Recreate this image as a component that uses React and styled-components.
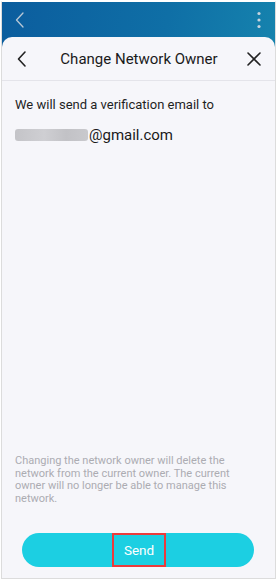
import React from "react";
import styled, { createGlobalStyle } from "styled-components";

const Global = createGlobalStyle`
	html, body {
		margin: 0;
		padding: 0;
		background: #ffffff;
	}
	body {
		font-family: Roboto, "Noto Sans", sans-serif;
	}
`;

const Frame = styled.div`
	width: 277px;
	height: 580px;
	box-sizing: border-box;
	padding: 1px;
	background: #ffffff;
`;

const Screen = styled.div`
	height: 100%;
	display: flex;
	flex-direction: column;
	border: 1px solid #dcdcdc;
	border-top-color: #ffffff;
	box-sizing: border-box;
	background: linear-gradient(100deg, #0b5d9e 0%, #0f6fa6 45%, #1b93b4 100%);
`;

const TopBar = styled.div`
	height: 35px;
	display: flex;
	align-items: center;
	justify-content: space-between;
	padding: 0 14px 0 12px;
	flex-shrink: 0;
`;

const Sheet = styled.div`
	flex: 1;
	display: flex;
	flex-direction: column;
	background: #f6f6fa;
	border-radius: 10px 10px 0 0;
`;

const Header = styled.div`
	height: 43px;
	display: flex;
	align-items: center;
	justify-content: space-between;
	padding: 0 12px 0 11px;
	border-bottom: 1px solid #e4e4ea;
	flex-shrink: 0;
`;

const Title = styled.div`
	font-size: 15px;
	color: #1a1a1a;
	margin-left: 2px;
`;

const IconButton = styled.div`
	width: 18px;
	height: 18px;
	display: flex;
	align-items: center;
	justify-content: center;
`;

const Body = styled.div`
	flex: 1;
	display: flex;
	flex-direction: column;
	padding: 0 13px;
`;

const Lead = styled.p`
	margin: 15px 0 0;
	font-size: 13px;
	line-height: 18px;
	color: #1f1f1f;
`;

const EmailRow = styled.div`
	margin-top: 11px;
	display: flex;
	align-items: center;
	font-size: 15px;
	color: #1a1a1a;
	line-height: 20px;
`;

const Blur = styled.span`
	display: inline-block;
	width: 73px;
	height: 12px;
	margin-right: 1px;
	border-radius: 3px;
	background: linear-gradient(90deg, #c4c4c8 0%, #cfcfd3 40%, #c2c2c6 70%, #c9c9cd 100%);
	filter: blur(0.6px);
`;

const Spacer = styled.div`
	flex: 1;
`;

const Note = styled.p`
	margin: 0;
	font-size: 11px;
	line-height: 12.5px;
	color: #acacb2;
	padding-right: 20px;
`;

const Footer = styled.div`
	padding: 28px 21px 11px 20px;
`;

const SendButton = styled.button`
	width: 100%;
	height: 34px;
	border: none;
	border-radius: 17px;
	background: #1ccfe2;
	display: flex;
	align-items: center;
	justify-content: center;
	padding: 0;
	font-family: inherit;
`;

const Highlight = styled.span`
	width: 50px;
	height: 30px;
	border: 2px solid #ec3b3b;
	display: flex;
	align-items: center;
	justify-content: center;
	color: #ffffff;
	font-size: 13.5px;
	box-sizing: content-box;
	margin-left: 2px;
`;

const Chevron = ({ color = "#222", w = 1.6 }) => (
	<svg width="12" height="18" viewBox="0 0 12 18">
		<path d="M9 2 L2.5 9 L9 16" fill="none" stroke={color} strokeWidth={w} strokeLinecap="round" strokeLinejoin="round" />
	</svg>
);

const Close = () => (
	<svg width="16" height="16" viewBox="0 0 16 16">
		<path d="M2 2 L14 14 M14 2 L2 14" fill="none" stroke="#222" strokeWidth="1.6" strokeLinecap="round" />
	</svg>
);

const Dots = () => (
	<svg width="4" height="18" viewBox="0 0 4 18">
		<circle cx="2" cy="2.5" r="1.6" fill="#c8d4de" />
		<circle cx="2" cy="9" r="1.6" fill="#c8d4de" />
		<circle cx="2" cy="15.5" r="1.6" fill="#c8d4de" />
	</svg>
);

const App = () => {
	return (
		<Frame>
			<Global />
			<Screen>
				<TopBar>
					<Chevron color="#b9c8d6" w={1.3} />
					<Dots />
				</TopBar>
				<Sheet>
					<Header>
						<IconButton>
							<Chevron />
						</IconButton>
						<Title>Change Network Owner</Title>
						<IconButton>
							<Close />
						</IconButton>
					</Header>
					<Body>
						<Lead>We will send a verification email to</Lead>
						<EmailRow>
							<Blur />
							@gmail.com
						</EmailRow>
						<Spacer />
						<Note>
							Changing the network owner will delete the network from the current owner. The current owner will no longer be able to manage this network.
						</Note>
					</Body>
					<Footer>
						<SendButton>
							<Highlight>Send</Highlight>
						</SendButton>
					</Footer>
				</Sheet>
			</Screen>
		</Frame>
	);
};

export default App;
